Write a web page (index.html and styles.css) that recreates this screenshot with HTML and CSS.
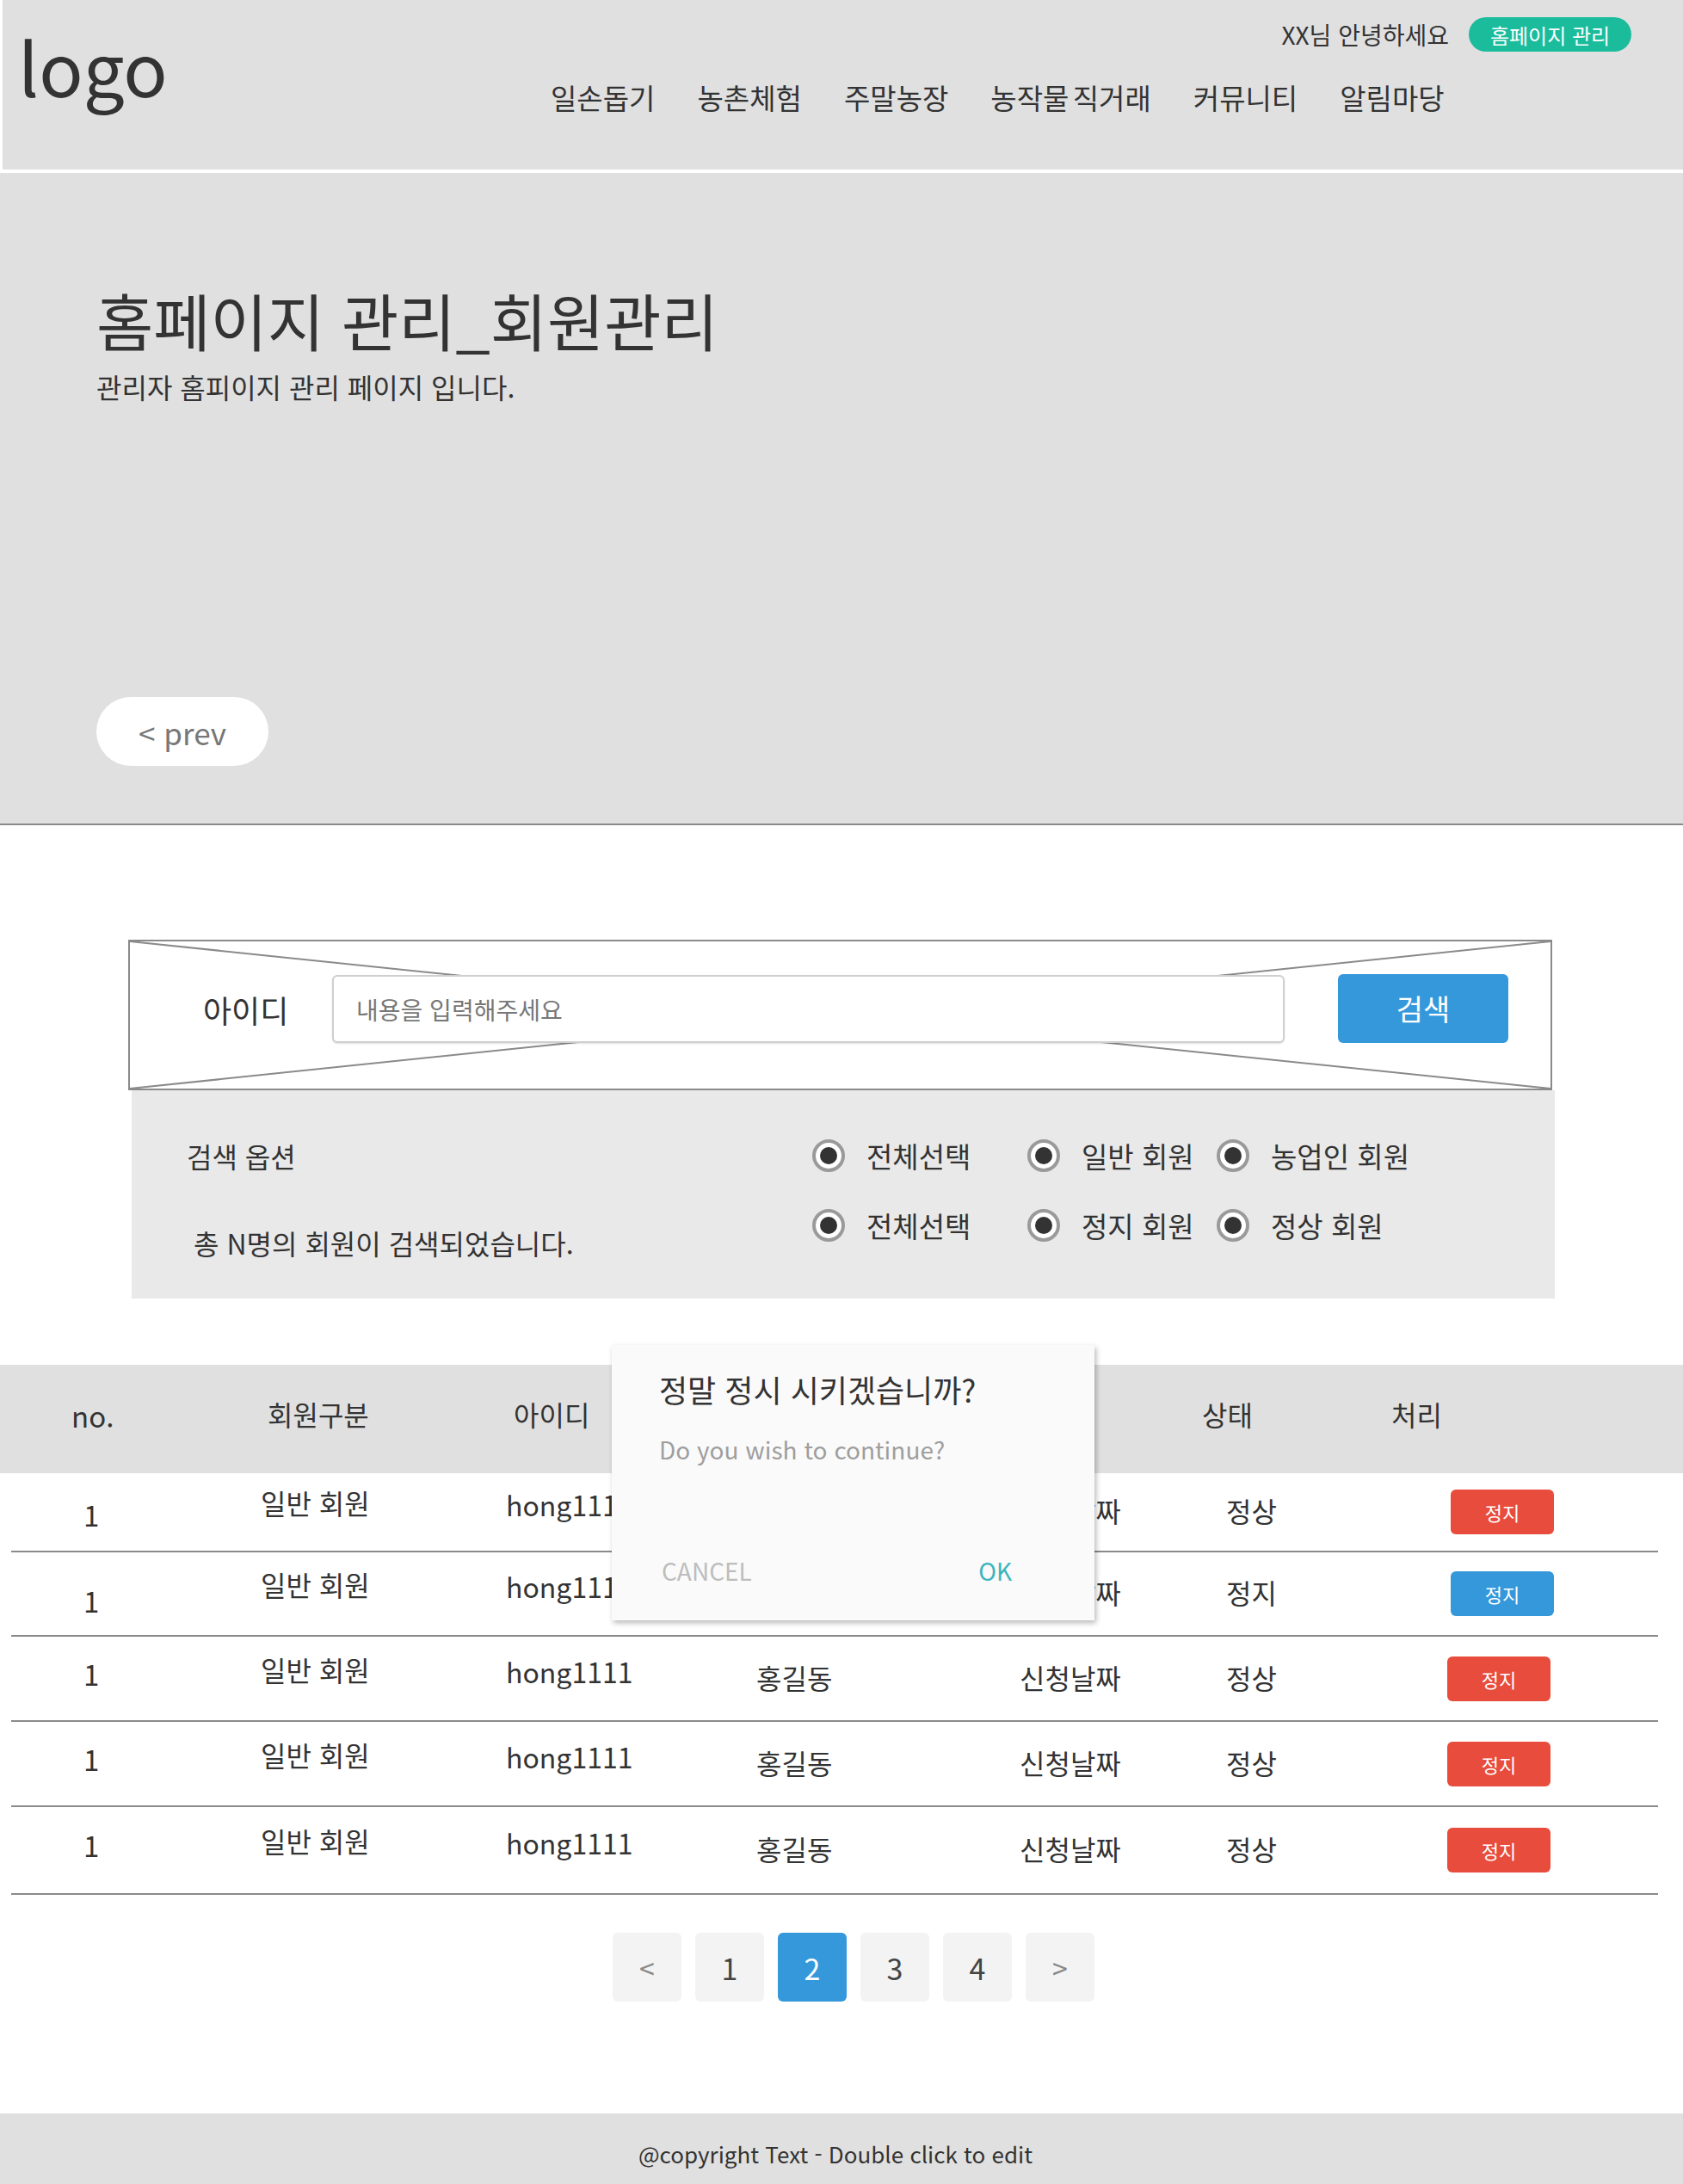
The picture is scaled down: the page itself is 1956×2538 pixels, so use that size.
FILE: index.html
```html
<!DOCTYPE html>
<html lang="ko">
<head>
<meta charset="utf-8">
<title>홈페이지 관리_회원관리</title>
<link rel="stylesheet" href="styles.css">
</head>
<body>
<header class="site-header">
  <div class="logo">logo</div>
  <div class="header-right">
    <div class="user-bar">
      <span class="greeting">XX님 안녕하세요</span>
      <a class="admin-btn">홈페이지 관리</a>
    </div>
    <nav class="main-nav">
      <a>일손돕기</a><a>농촌체험</a><a>주말농장</a><a>농작물 직거래</a><a>커뮤니티</a><a>알림마당</a>
    </nav>
  </div>
</header>

<section class="hero">
  <h1 class="hero-title">홈페이지 관리_회원관리</h1>
  <p class="hero-sub">관리자 홈피이지 관리 페이지 입니다.</p>
  <button class="prev-btn">&lt; prev</button>
</section>

<main>
  <div class="search-box">
    <svg class="placeholder-x" viewBox="0 0 100 100" preserveAspectRatio="none">
      <line x1="0" y1="0" x2="100" y2="100" vector-effect="non-scaling-stroke"/>
      <line x1="100" y1="0" x2="0" y2="100" vector-effect="non-scaling-stroke"/>
    </svg>
    <span class="search-label">아이디</span>
    <div class="search-input">내용을 입력해주세요</div>
    <button class="search-btn">검색</button>
  </div>

  <div class="options">
    <div class="options-left">
      <div class="opt-title">검색 옵션</div>
      <div class="opt-count">총 N명의 회원이 검색되었습니다.</div>
    </div>
    <div class="options-right">
      <div class="radio-row">
        <label class="radio-opt"><span class="radio"></span>전체선택</label>
        <label class="radio-opt"><span class="radio"></span>일반 회원</label>
        <label class="radio-opt"><span class="radio"></span>농업인 회원</label>
      </div>
      <div class="radio-row second">
        <label class="radio-opt"><span class="radio"></span>전체선택</label>
        <label class="radio-opt"><span class="radio"></span>정지 회원</label>
        <label class="radio-opt"><span class="radio"></span>정상 회원</label>
      </div>
    </div>
  </div>

  <div class="table-wrap">
    <div class="thead">
      <div class="th th-no">no.</div>
      <div class="th th-type">회원구분</div>
      <div class="th th-id">아이디</div>
      <div class="th">이름</div>
      <div class="th">날짜</div>
      <div class="th">상태</div>
      <div class="th">처리</div>
    </div>
    <div class="tbody">
      <div class="tr">
        <div class="td td-no">1</div><div class="td td-up">일반 회원</div><div class="td td-id">hong1111</div><div class="td">홍길동</div><div class="td">신청날짜</div><div class="td td-state">정상</div><div class="td td-act"><button class="act-btn red">정지</button></div>
      </div>
      <div class="tr">
        <div class="td td-no">1</div><div class="td td-up">일반 회원</div><div class="td td-id">hong1111</div><div class="td">홍길동</div><div class="td">신청날짜</div><div class="td td-state">정지</div><div class="td td-act"><button class="act-btn blue">정지</button></div>
      </div>
      <div class="tr">
        <div class="td td-no">1</div><div class="td td-up">일반 회원</div><div class="td td-id">hong1111</div><div class="td">홍길동</div><div class="td">신청날짜</div><div class="td td-state">정상</div><div class="td td-act shift"><button class="act-btn red">정지</button></div>
      </div>
      <div class="tr">
        <div class="td td-no">1</div><div class="td td-up">일반 회원</div><div class="td td-id">hong1111</div><div class="td">홍길동</div><div class="td">신청날짜</div><div class="td td-state">정상</div><div class="td td-act shift"><button class="act-btn red">정지</button></div>
      </div>
      <div class="tr">
        <div class="td td-no">1</div><div class="td td-up">일반 회원</div><div class="td td-id">hong1111</div><div class="td">홍길동</div><div class="td">신청날짜</div><div class="td td-state">정상</div><div class="td td-act shift"><button class="act-btn red">정지</button></div>
      </div>
    </div>

    <div class="dialog">
      <div class="dialog-title">정말 정시 시키겠습니까?</div>
      <div class="dialog-text">Do you wish to continue?</div>
      <div class="dialog-actions">
        <span class="dlg-cancel">CANCEL</span>
        <span class="dlg-ok">OK</span>
      </div>
    </div>
  </div>

  <div class="pagination">
    <a class="page arrow">&lt;</a>
    <a class="page">1</a>
    <a class="page active">2</a>
    <a class="page">3</a>
    <a class="page">4</a>
    <a class="page arrow">&gt;</a>
  </div>
</main>

<footer class="site-footer">@copyright Text - Double click to edit</footer>
</body>
</html>
```

FILE: styles.css
```css
* { box-sizing: border-box; margin: 0; padding: 0; }

body {
  width: 1956px;
  font-family: "Noto Sans CJK KR", "Noto Sans", sans-serif;
  color: #333;
  background: #fff;
}

a { color: inherit; text-decoration: none; }
button { font-family: inherit; border: none; cursor: pointer; }

/* header */
.site-header {
  display: flex;
  height: 197px;
  background: #e0e0e0;
  border-left: 3px solid #fff;
}
.logo {
  width: 637px;
  padding: 33px 0 0 18px;
  font-size: 85px;
  line-height: 85px;
  color: #333;
}
.header-right {
  flex: 1;
  display: flex;
  flex-direction: column;
}
.user-bar {
  display: flex;
  justify-content: flex-end;
  align-items: center;
  gap: 23px;
  padding: 20px 60px 0 0;
}
.greeting { font-size: 28px; line-height: 40px; color: #333; }
.admin-btn {
  display: flex;
  align-items: center;
  justify-content: center;
  width: 189px;
  height: 40px;
  border-radius: 20px;
  background: #1abc9c;
  color: #fff;
  font-size: 24px;
}
.main-nav {
  display: flex;
  gap: 49px;
  margin-top: 33px;
}
.main-nav a { font-size: 33px; line-height: 40px; color: #333; word-spacing: -5px; }

/* hero */
.hero {
  margin-top: 4px;
  height: 758px;
  background: #e0e0e0;
  border-bottom: 2px solid #8a8a8a;
  padding: 128px 0 0 112px;
  display: flex;
  flex-direction: column;
  align-items: flex-start;
}
.hero-title {
  font-size: 72px;
  line-height: 84px;
  font-weight: 400;
  color: #333;
}
.hero-sub {
  margin-top: 16px;
  font-size: 32px;
  line-height: 40px;
  color: #333;
}
.prev-btn {
  margin-top: auto;
  margin-bottom: 67px;
  width: 200px;
  height: 80px;
  border-radius: 40px;
  background: #fff;
  color: #777;
  font-size: 35px;
}

/* search */
.search-box {
  position: relative;
  margin: 133px 0 0 149px;
  width: 1655px;
  height: 175px;
  border: 2px solid #8a8a8a;
  display: flex;
  align-items: center;
  padding-bottom: 14px;
}
.placeholder-x {
  position: absolute;
  left: 0; top: 0;
  width: 100%; height: 100%;
}
.placeholder-x line { stroke: #8a8a8a; stroke-width: 2; }
.search-label {
  position: relative;
  flex: none;
  width: 150px;
  margin-left: 85px;
  font-size: 36px;
  line-height: 40px;
  color: #333;
}
.search-input {
  position: relative;
  flex: none;
  width: 1107px;
  height: 79px;
  border: 2px solid #cfcfcf;
  border-radius: 6px;
  background: #fff;
  box-shadow: 0 1px 2px rgba(0,0,0,0.12);
  display: flex;
  align-items: center;
  padding-left: 26px;
  font-size: 28px;
  color: #777;
}
.search-btn {
  position: relative;
  flex: none;
  margin-left: 62px;
  margin-top: -2px;
  width: 198px;
  height: 80px;
  border-radius: 6px;
  background: #3498db;
  color: #fff;
  font-size: 34px;
}

/* options */
.options {
  margin-left: 153px;
  width: 1654px;
  height: 242px;
  background: #e9e9e9;
  display: flex;
}
.options-left {
  width: 791px;
  padding: 56px 0 0 64px;
}
.opt-title { font-size: 32px; line-height: 40px; }
.opt-count { margin: 61px 0 0 8px; font-size: 32px; line-height: 40px; }
.options-right { padding-top: 56px; }
.radio-row {
  display: grid;
  grid-template-columns: 250px 220px auto;
  height: 40px;
  align-items: center;
}
.radio-row.second { margin-top: 41px; }
.radio-opt {
  display: flex;
  align-items: center;
  gap: 25px;
  font-size: 33px;
  line-height: 40px;
  color: #333;
}
.radio {
  flex: none;
  width: 38px;
  height: 38px;
  border-radius: 50%;
  border: 4px solid #9a9a9a;
  background: #fff;
  display: flex;
  align-items: center;
  justify-content: center;
}
.radio::after {
  content: "";
  width: 20px;
  height: 20px;
  border-radius: 50%;
  background: #333;
}

/* table */
.table-wrap {
  position: relative;
  margin-top: 77px;
}
.thead {
  height: 126px;
  background: #e0e0e0;
  display: grid;
  grid-template-columns: 303px 285px 291px 306px 212px 220px 1fr;
  align-items: center;
  padding-bottom: 12px;
}
.th { font-size: 32px; line-height: 40px; color: #333; }
.th-no { padding-left: 83px; font-size: 33px; padding-top: 4px; }
.th-type { padding-left: 8px; }
.th-id { padding-left: 9px; }

.tr {
  margin: 0 29px 0 13px;
  height: 98px;
  border-bottom: 2px solid #8a8a8a;
  display: grid;
  grid-template-columns: 290px 285px 291px 306px 212px 220px 1fr;
  align-items: center;
}
.tr:first-child { height: 92px; }
.tr:nth-child(3), .tr:nth-child(4) { height: 99px; }
.tr:last-child { height: 102px; }
.td { font-size: 32px; line-height: 40px; color: #333; padding-bottom: 4px; }
.td-no { padding-left: 84px; font-size: 33px; padding-bottom: 12px; }
.tr:first-child .td-no { padding-top: 6px; padding-bottom: 0; }
.tr:nth-child(2) .td-no { padding-top: 16px; padding-bottom: 0; }
.td-id { font-size: 32px; padding-bottom: 18px; }
.td-up { padding-bottom: 22px; }
.td-state { padding-left: 28px; }
.td-act { padding-left: 69px; padding-bottom: 0; display: flex; }
.td-act.shift { padding-left: 65px; }
.act-btn {
  width: 120px;
  height: 52px;
  border-radius: 6px;
  color: #fff;
  font-size: 22px;
}
.act-btn.red { background: #e74c3c; }
.act-btn.blue { background: #3498db; }

/* dialog */
.dialog {
  position: absolute;
  left: 711px;
  top: -23px;
  width: 561px;
  height: 320px;
  background: #fafafa;
  box-shadow: 2px 3px 6px rgba(0,0,0,0.28);
  display: flex;
  flex-direction: column;
  padding: 29px 96px 38px 55px;
}
.dialog-title { font-size: 36px; line-height: 44px; color: #333; }
.dialog-text { margin-top: 28px; font-size: 28px; line-height: 40px; color: #9e9e9e; }
.dialog-actions {
  margin-top: auto;
  display: flex;
  justify-content: space-between;
  font-size: 28px;
  line-height: 40px;
}
.dlg-cancel { color: #bdbdbd; padding-left: 3px; }
.dlg-ok { color: #3bb5bf; }

/* pagination */
.pagination {
  margin: 44px 0 0 712px;
  display: flex;
  gap: 16px;
}
.page {
  width: 80px;
  height: 80px;
  border-radius: 6px;
  background: #f3f3f3;
  display: flex;
  align-items: center;
  justify-content: center;
  font-size: 34px;
  color: #444;
}
.page.arrow { color: #888; font-size: 32px; }
.page.active { background: #3498db; color: #fff; }

/* footer */
.site-footer {
  margin-top: 130px;
  height: 82px;
  background: #e0e0e0;
  text-align: center;
  font-size: 26px;
  line-height: 82px;
  padding: 6px 14px 0 0;
  color: #333;
}
```
